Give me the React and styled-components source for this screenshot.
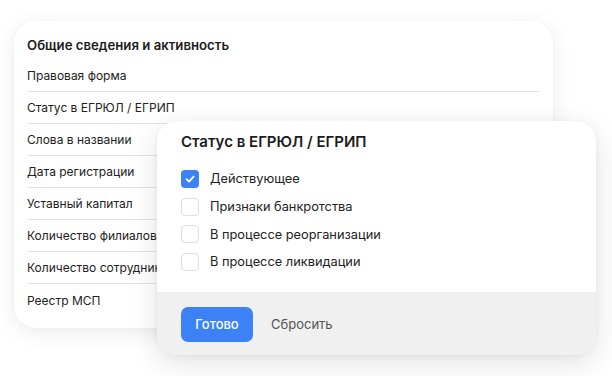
import React, { useState } from 'react';
import styled, { createGlobalStyle } from 'styled-components';

const GlobalStyle = createGlobalStyle`
  html, body {
    margin: 0;
    padding: 0;
    background: #ffffff;
  }
  body {
    font-family: Inter, "Noto Sans", "Liberation Sans", sans-serif;
    color: #1f1f1f;
    -webkit-font-smoothing: antialiased;
  }
`;

const Stage = styled.div`
  position: relative;
  width: 612px;
  height: 376px;
  overflow: hidden;
  padding: 21px 0 0 14px;
  box-sizing: border-box;
`;

const Card = styled.section`
  width: 539px;
  height: 307px;
  box-sizing: border-box;
  padding: 14px 13px 0 13px;
  background: #fff;
  border-radius: 22px;
  box-shadow: 0 4px 22px rgba(0, 0, 0, 0.08), 0 1px 4px rgba(0, 0, 0, 0.03);
`;

const CardTitle = styled.h2`
  margin: 0 0 5px;
  font-size: 13.2px;
  line-height: 20px;
  font-weight: 600;
  color: #1c1c1c;
`;

const Row = styled.div`
  height: 32px;
  display: flex;
  align-items: center;
  font-size: 12px;
  color: #222;
  border-bottom: ${(p) => (p.$last ? 'none' : '1px solid #e4e4e4')};
  box-sizing: border-box;
`;

const Popover = styled.div`
  position: absolute;
  left: 157px;
  top: 121px;
  width: 439px;
  height: 234px;
  background: #fff;
  border-radius: 20px;
  overflow: hidden;
  display: flex;
  flex-direction: column;
  box-shadow: 0 8px 30px rgba(0, 0, 0, 0.12), 0 1px 5px rgba(0, 0, 0, 0.05);
`;

const PopBody = styled.div`
  flex: 1;
  padding: 11px 24px 0 24px;
`;

const PopTitle = styled.h3`
  margin: 0 0 13px;
  font-size: 15px;
  line-height: 20px;
  font-weight: 600;
  color: #1c1c1c;
`;

const Option = styled.label`
  height: 27.7px;
  display: flex;
  align-items: center;
  gap: 11px;
  font-size: 12.8px;
  color: #222;
  cursor: pointer;
`;

const Box = styled.span`
  width: 18px;
  height: 18px;
  box-sizing: border-box;
  border-radius: 4px;
  border: ${(p) => (p.$checked ? 'none' : '1.5px solid #dedede')};
  background: ${(p) => (p.$checked ? '#3c82f6' : '#fff')};
  display: flex;
  align-items: center;
  justify-content: center;
  flex-shrink: 0;
`;

const Footer = styled.div`
  height: 62px;
  background: #f0f0f0;
  display: flex;
  align-items: center;
  gap: 18px;
  padding: 1px 24px 0 24px;
`;

const Primary = styled.button`
  height: 35px;
  width: 72px;
  border: none;
  border-radius: 7px;
  background: #3c82f6;
  color: #fff;
  font-family: inherit;
  font-size: 13px;
  font-weight: 500;
  cursor: pointer;
`;

const Ghost = styled.button`
  border: none;
  background: none;
  padding: 0;
  color: #555;
  font-family: inherit;
  font-size: 13px;
  cursor: pointer;
`;

const rows = [
  'Правовая форма',
  'Статус в ЕГРЮЛ / ЕГРИП',
  'Слова в названии',
  'Дата регистрации',
  'Уставный капитал',
  'Количество филиалов',
  'Количество сотрудников',
  'Реестр МСП',
];

const options = [
  'Действующее',
  'Признаки банкротства',
  'В процессе реорганизации',
  'В процессе ликвидации',
];

const Check = () => (
  <svg width="12" height="12" viewBox="0 0 12 12" fill="none">
    <path d="M2.5 6.2 L5 8.6 L9.6 3.6" stroke="#fff" strokeWidth="1.8" strokeLinecap="round" strokeLinejoin="round" />
  </svg>
);

export default function App() {
  const [checked, setChecked] = useState({ 0: true });

  return (
    <Stage>
      <GlobalStyle />
      <Card>
        <CardTitle>Общие сведения и активность</CardTitle>
        {rows.map((r, i) => (
          <Row key={r} $last={i === rows.length - 1}>{r}</Row>
        ))}
      </Card>
      <Popover>
        <PopBody>
          <PopTitle>Статус в ЕГРЮЛ / ЕГРИП</PopTitle>
          {options.map((o, i) => (
            <Option key={o} onClick={() => setChecked({ ...checked, [i]: !checked[i] })}>
              <Box $checked={checked[i]}>{checked[i] && <Check />}</Box>
              {o}
            </Option>
          ))}
        </PopBody>
        <Footer>
          <Primary>Готово</Primary>
          <Ghost onClick={() => setChecked({})}>Сбросить</Ghost>
        </Footer>
      </Popover>
    </Stage>
  );
}
